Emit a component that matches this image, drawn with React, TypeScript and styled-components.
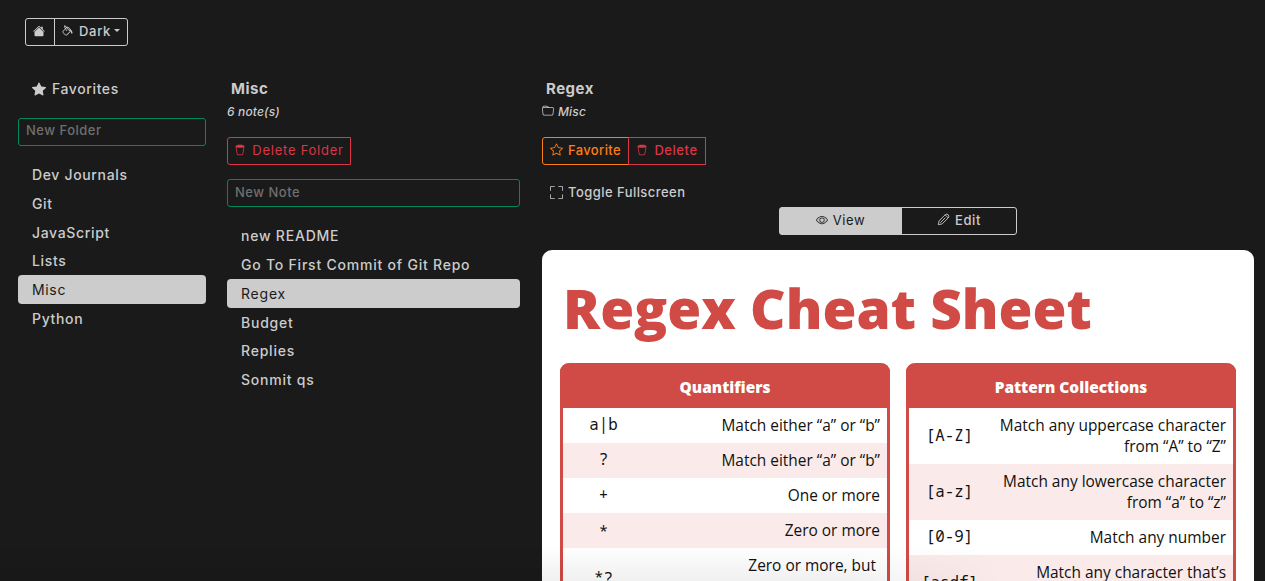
import React from 'react';
import styled, { createGlobalStyle } from 'styled-components';
import {
  BsHouseFill, BsPaintBucket, BsStarFill, BsStar, BsTrash2, BsFolder, BsFullscreen, BsEye,
} from 'react-icons/bs';

const FG = '#cccccc';
const BG = '#1a1a1a';
const RED = '#dc3545';
const ORANGE = '#fd7e14';
const GREEN = '#00875a';
const SHEET = '#d04b45';

const GlobalStyle = createGlobalStyle`
  * { box-sizing: border-box; }
  html, body { margin: 0; height: 100%; overflow: hidden; }
  body { background: ${BG}; color: ${FG}; font-family: Inter, "Liberation Sans", sans-serif; font-size: 14px; font-weight: 500; letter-spacing: 0.7px; }
  svg { flex: none; display: block; }
`;

const Page = styled.div`
  height: 581px;
  overflow: hidden;
  padding: 18px 11px 0 18px;
`;

const Toolbar = styled.div`
  display: flex;
  margin-left: 7px;
`;

const Button = styled.button<{ $color?: string; $active?: boolean; $w: number; $round?: string; $gap?: number; $weight?: number; $spacing?: number }>`
  display: flex;
  align-items: center;
  justify-content: center;
  gap: ${(p) => p.$gap ?? 5}px;
  width: ${(p) => p.$w}px;
  height: 28px;
  padding: 0 0 3px;
  border: 1px solid ${(p) => p.$color ?? FG};
  border-radius: ${(p) => p.$round ?? '3px'};
  background: ${(p) => (p.$active ? FG : 'transparent')};
  color: ${(p) => (p.$active ? BG : p.$color ?? FG)};
  font: inherit;
  font-size: 13px;
  font-weight: ${(p) => p.$weight ?? 500};
  letter-spacing: ${(p) => p.$spacing ?? 0.65}px;
  white-space: nowrap;
  & + & { margin-left: -1px; }
`;

const HomeButton = styled(Button)`
  padding-right: 2px;
`;

const Caret = styled.span`
  border: 3px solid transparent;
  border-top-color: currentColor;
  border-bottom: 0;
  margin-left: -2px;
`;

const Columns = styled.div`
  display: grid;
  grid-template-columns: 188px 293px 712px;
  column-gap: 21px;
  padding-top: 32px;
`;

const Column = styled.section`
  display: flex;
  flex-direction: column;
`;

const NoteColumn = styled(Column)`
  margin-left: 1px;
  width: 712px;
`;

const FavoritesLink = styled.div`
  display: flex;
  align-items: center;
  gap: 6px;
  height: 22px;
  padding: 0 0 1px 14px;
  letter-spacing: 0.6px;
`;

const Heading = styled.h1`
  margin: 0;
  padding-left: 4px;
  height: 22px;
  line-height: 22px;
  font-size: 15px;
  font-weight: 700;
  letter-spacing: 0.5px;
`;

const Meta = styled.div`
  display: flex;
  align-items: center;
  gap: 4px;
  height: 22px;
  font-size: 12px;
  font-style: italic;
  letter-spacing: 0.15px;
`;

const Field = styled.input<{ $top: number; $lift: number }>`
  width: 100%;
  height: 28px;
  margin: ${(p) => p.$top}px 0 0;
  padding: 0 7px ${(p) => p.$lift}px;
  border: 1px solid ${GREEN};
  border-radius: 3px;
  background: transparent;
  color: ${FG};
  font: inherit;
  font-size: 13px;
  letter-spacing: 0.5px;
  outline: 0;
  &::placeholder { color: #6f6f6f; opacity: 1; }
`;

const List = styled.ul<{ $spacing: number; $top: number }>`
  list-style: none;
  margin: ${(p) => p.$top}px 0 0;
  padding: 0;
  letter-spacing: ${(p) => p.$spacing}px;
`;

const Item = styled.li<{ $active?: boolean }>`
  height: 28.8px;
  line-height: 30.2px;
  padding-left: 14px;
  border-radius: 4px;
  background: ${(p) => (p.$active ? FG : 'transparent')};
  color: ${(p) => (p.$active ? BG : FG)};
  font-weight: ${(p) => (p.$active ? 400 : 500)};
`;

const Actions = styled.div`
  display: flex;
  margin-top: 15px;
`;

const Fullscreen = styled.div`
  display: flex;
  align-items: center;
  gap: 5px;
  height: 20px;
  margin: 17px 0 5px;
  padding-left: 8px;
  font-size: 13px;
  letter-spacing: 0.45px;
`;

const Modes = styled.div`
  display: flex;
  justify-content: center;
  margin-bottom: 15px;
`;

const Sheet = styled.article`
  height: 360px;
  padding: 0 18px;
  border-radius: 10px 10px 0 0;
  background: #fff;
  color: #111;
  font-family: "Open Sans", "Noto Sans", sans-serif;
  font-weight: 400;
  font-size: 15.45px;
  letter-spacing: 0;
`;

const SheetTitle = styled.h2`
  margin: 0;
  padding: 20px 0 0 3px;
  height: 113px;
  line-height: 76px;
  font-size: 54.9px;
  font-weight: 800;
  color: ${SHEET};
  white-space: nowrap;
`;

const Tables = styled.div`
  display: flex;
  justify-content: space-between;
`;

const Table = styled.div`
  width: 330px;
  border: solid ${SHEET};
  border-width: 0 3px;
  border-radius: 9px 9px 0 0;
`;

const TableHead = styled.div`
  height: 44.5px;
  margin: 0 -3px;
  line-height: 48px;
  border-radius: 9px 9px 0 0;
  background: ${SHEET};
  color: #fff;
  font-weight: 800;
  text-align: center;
`;

const Row = styled.div`
  display: grid;
  grid-template-columns: 81px 1fr;
  align-items: center;
  padding: 7.5px 7px 6.5px 0;
  line-height: 21.1px;
  text-align: right;
  &:nth-child(odd) { background: #faebea; }
`;

const Code = styled.code<{ $low: boolean }>`
  transform: translateY(${(p) => (p.$low ? 2 : -1)}px);
  font-family: "Noto Sans Mono", "DejaVu Sans Mono", monospace;
  font-size: 15.8px;
  text-align: center;
`;

const BottomShade = styled.div`
  position: absolute;
  left: 0;
  top: 545px;
  width: 1000px;
  height: 36px;
  background: linear-gradient(to bottom, rgba(0, 0, 0, 0), rgba(0, 0, 0, 0.06));
  mask-image: linear-gradient(to right, #000 85%, transparent);
  pointer-events: none;
`;

const folders = ['Dev Journals', 'Git', 'JavaScript', 'Lists', 'Misc', 'Python'];
const notes = ['new README', 'Go To First Commit of Git Repo', 'Regex', 'Budget', 'Replies', 'Sonmit qs'];

const quantifiers: [string, string[]][] = [
  ['a|b', ['Match either “a” or “b”']],
  ['?', ['Match either “a” or “b”']],
  ['+', ['One or more']],
  ['*', ['Zero or more']],
  ['*?', ['Zero or more, but\u00a0', '\u00a0']],
];
const collections: [string, string[]][] = [
  ['[A-Z]', ['Match any uppercase character', 'from “A” to “Z”']],
  ['[a-z]', ['Match any lowercase character', 'from “a” to “z”']],
  ['[0-9]', ['Match any number']],
  ['[asdf]', ['Match any character that’s', '\u00a0']],
];

function PenIcon() {
  return (
    <svg width="13" height="13" viewBox="0 0 16 16" fill="none" stroke="currentColor" strokeWidth="1.1" strokeLinejoin="round">
      <path d="M1.6 14.4 2.6 9.6 10 2.2Q12 .6 13.8 2.2 15.4 4 13.8 6L6.4 13.4Z" />
      <path d="M10.4 5.6 4 12M10 2.2 13.8 6" />
    </svg>
  );
}

function CheatTable({ title, rows }: { title: string; rows: [string, string[]][] }) {
  return (
    <Table>
      <TableHead>{title}</TableHead>
      {rows.map(([c, lines]) => (
        <Row key={c}>
          <Code $low={c.startsWith('*')}>{c}</Code>
          <div>{lines.map((l) => <div key={l}>{l}</div>)}</div>
        </Row>
      ))}
    </Table>
  );
}

export default function App() {
  return (
    <Page>
      <GlobalStyle />
      <Toolbar>
        <HomeButton $w={30} $round="3px 0 0 3px"><BsHouseFill size={12} /></HomeButton>
        <Button $w={74} $round="0 3px 3px 0"><BsPaintBucket size={12} />Dark<Caret /></Button>
      </Toolbar>
      <Columns>
        <Column>
          <FavoritesLink><BsStarFill size={14} />Favorites</FavoritesLink>
          <Field $top={18} $lift={5} placeholder="New Folder" />
          <List $spacing={0.65} $top={14}>{folders.map((f) => <Item key={f} $active={f === 'Misc'}>{f}</Item>)}</List>
        </Column>
        <Column>
          <Heading>Misc</Heading>
          <Meta>6 note(s)</Meta>
          <Actions>
            <Button $w={124} $color={RED} $weight={400} $spacing={0.75} $gap={6} $round="3px 0 0 3px"><BsTrash2 size={12} />Delete Folder</Button>
          </Actions>
          <Field $top={14} $lift={3} placeholder="New Note" />
          <List $spacing={0.78} $top={14.3}>{notes.map((n) => <Item key={n} $active={n === 'Regex'}>{n}</Item>)}</List>
        </Column>
        <NoteColumn>
          <Heading>Regex</Heading>
          <Meta><BsFolder size={12} />Misc</Meta>
          <Actions>
            <Button $w={87} $color={ORANGE} $spacing={0.4} $round="3px 0 0 3px"><BsStar size={13} />Favorite</Button>
            <Button $w={78} $color={RED} $spacing={0.55} $gap={6} $round="0"><BsTrash2 size={12} />Delete</Button>
          </Actions>
          <Fullscreen><BsFullscreen size={13} />Toggle Fullscreen</Fullscreen>
          <Modes>
            <Button $w={123} $active $weight={400} $round="3px 0 0 3px"><BsEye size={12} />View</Button>
            <Button $w={116} $round="0 3px 3px 0"><PenIcon />Edit</Button>
          </Modes>
          <Sheet>
            <SheetTitle>Regex Cheat Sheet</SheetTitle>
            <Tables>
              <CheatTable title="Quantifiers" rows={quantifiers} />
              <CheatTable title="Pattern Collections" rows={collections} />
            </Tables>
          </Sheet>
        </NoteColumn>
      </Columns>
      <BottomShade />
    </Page>
  );
}
